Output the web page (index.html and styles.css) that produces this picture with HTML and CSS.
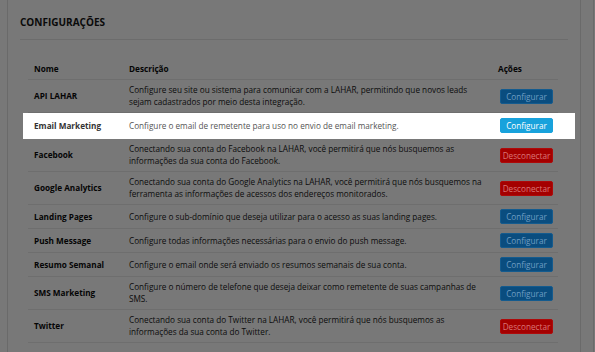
FILE: index.html
```html
<!DOCTYPE html>
<html lang="pt-BR">
<head>
  <meta charset="UTF-8">
  <meta name="viewport" content="width=device-width, initial-scale=1.0">
  <title>Configurações</title>
  <link rel="stylesheet" href="styles.css">
</head>
<body>
  <div class="page">
    <div class="panel">
      <h1 class="panel-title">CONFIGURAÇÕES</h1>

      <div class="table">
        <div class="row head">
          <div class="cell">Nome</div>
          <div class="cell">Descrição</div>
          <div class="cell">Ações</div>
        </div>

        <div class="row">
          <div class="cell name">API LAHAR</div>
          <div class="cell desc">Configure seu site ou sistema para comunicar com a LAHAR, permitindo que novos leads sejam cadastrados por meio desta integração.</div>
          <div class="cell"><a class="btn btn-blue">Configurar</a></div>
        </div>

        <!-- row highlighted by the tour -->
        <div class="row spotlight">
          <div class="cell name">Email Marketing</div>
          <div class="cell desc">Configure o email de remetente para uso no envio de email marketing.</div>
          <div class="cell"><a class="btn btn-blue">Configurar</a></div>
        </div>

        <div class="row">
          <div class="cell name">Facebook</div>
          <div class="cell desc">Conectando sua conta do Facebook na LAHAR, você permitirá que nós busquemos as informações da sua conta do Facebook.</div>
          <div class="cell"><a class="btn btn-red">Desconectar</a></div>
        </div>

        <div class="row">
          <div class="cell name">Google Analytics</div>
          <div class="cell desc">Conectando sua conta do Google Analytics na LAHAR, você permitirá que nós busquemos na ferramenta as informações de acessos dos endereços monitorados.</div>
          <div class="cell"><a class="btn btn-red">Desconectar</a></div>
        </div>

        <div class="row">
          <div class="cell name">Landing Pages</div>
          <div class="cell desc">Configure o sub-domínio que deseja utilizar para o acesso as suas landing pages.</div>
          <div class="cell"><a class="btn btn-blue">Configurar</a></div>
        </div>

        <div class="row">
          <div class="cell name">Push Message</div>
          <div class="cell desc">Configure todas informações necessárias para o envio do push message.</div>
          <div class="cell"><a class="btn btn-blue">Configurar</a></div>
        </div>

        <div class="row">
          <div class="cell name">Resumo Semanal</div>
          <div class="cell desc">Configure o email onde será enviado os resumos semanais de sua conta.</div>
          <div class="cell"><a class="btn btn-blue">Configurar</a></div>
        </div>

        <div class="row">
          <div class="cell name">SMS Marketing</div>
          <div class="cell desc">Configure o número de telefone que deseja deixar como remetente de suas campanhas de SMS.</div>
          <div class="cell"><a class="btn btn-blue">Configurar</a></div>
        </div>

        <div class="row">
          <div class="cell name">Twitter</div>
          <div class="cell desc">Conectando sua conta do Twitter na LAHAR, você permitirá que nós busquemos as informações da sua conta do Twitter.</div>
          <div class="cell"><a class="btn btn-red">Desconectar</a></div>
        </div>
      </div>
    </div>
  </div>
</body>
</html>
```

FILE: styles.css
```css
/* page is shown dimmed behind the tour overlay */
body {
  font-family: 'Open Sans', 'Noto Sans', Arial, sans-serif;
  margin: 0;
  padding: 0;
  background-color: #787878;
  color: #111;
  height: 352px;
  overflow: hidden;
}

.page {
  width: 594px;
  height: 100%;
  border-right: 1px solid #6a6a6a;
  box-sizing: border-box;
}

.panel {
  margin-left: 7px;
  width: 574px;
  height: 100%;
  box-sizing: border-box;
  border-left: 1px solid #6a6a6a;
  border-right: 1px solid #6a6a6a;
  padding: 0 12px;
}

.panel-title {
  margin: 0;
  padding: 15px 0 10px;
  font-size: 10px;
  line-height: 14px;
  font-weight: 700;
  color: #0a0a0a;
  border-bottom: 1px solid #6c6c6c;
}

.table {
  margin: 18px 10px 0 8px;
  font-size: 8.2px;
  line-height: 12px;
}

.row {
  display: grid;
  grid-template-columns: 95px 369px 1fr;
  align-items: center;
  padding: 4px 0;
  border-bottom: 1px solid #6e6e6e;
}

.row.head {
  padding: 5px 0 4px;
  font-weight: 700;
  color: #050505;
}

.cell {
  padding: 0 6px;
}

.name {
  font-weight: 700;
  color: #050505;
}

.desc {
  color: #0c0c0c;
}

.btn {
  display: inline-block;
  width: 53px;
  height: 15px;
  margin-left: 2px;
  box-sizing: border-box;
  border: 1px solid;
  border-radius: 2px;
  font-size: 8.2px;
  line-height: 13px;
  text-align: center;
  cursor: pointer;
}

.btn-blue {
  background-color: #0a4d7f;
  border-color: #145b8e;
  color: #6f9dc2;
}

.btn-red {
  background-color: #a40000;
  border-color: #ad0a0a;
  color: #da7676;
}

/* highlighted row, not dimmed */
.spotlight {
  background-color: #fff;
  margin: 0 -17px 0 -5px;
  padding: 5px 17px 5px 5px;
  border-bottom-color: #fff;
}

.spotlight .name {
  color: #333;
}

.spotlight .desc {
  color: #555;
}

.spotlight .btn-blue {
  background-color: #18a2dc;
  border-color: #18a2dc;
  color: #fff;
}
```
